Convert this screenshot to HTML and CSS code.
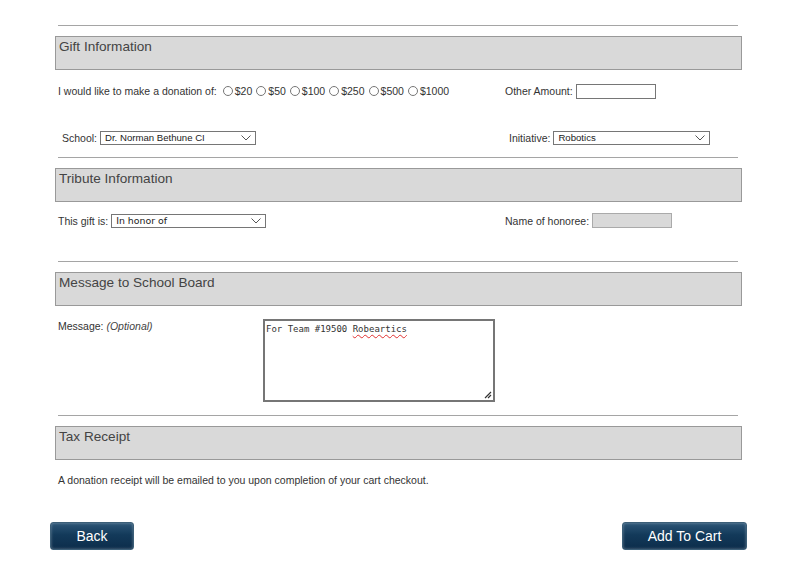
FILE: index.html
```html
<!DOCTYPE html>
<html lang="en">
<head>
  <meta charset="UTF-8">
  <meta name="viewport" content="width=device-width, initial-scale=1.0">
  <title>Donation</title>
  <link rel="stylesheet" href="styles.css">
</head>
<body>
  <div class="wrap">
    <!-- Gift -->
    <div class="rule"></div>
    <div class="head">Gift Information</div>
    <div class="row donation-row">
      <div class="col-left">
        <span class="label lead">I would like to make a donation of:</span>
        <label class="opt"><input type="radio" name="amt"><span>$20</span></label>
        <label class="opt"><input type="radio" name="amt"><span>$50</span></label>
        <label class="opt"><input type="radio" name="amt"><span>$100</span></label>
        <label class="opt"><input type="radio" name="amt"><span>$250</span></label>
        <label class="opt"><input type="radio" name="amt"><span>$500</span></label>
        <label class="opt"><input type="radio" name="amt"><span>$1000</span></label>
      </div>
      <div class="col-right">
        <span class="label">Other Amount:</span>
        <input class="text-in" type="text">
      </div>
    </div>
    <div class="row school-row">
      <div class="col-left indent">
        <span class="label">School:</span>
        <span class="sel w156">
          <select><option>Dr. Norman Bethune CI</option></select>
          <svg class="chev" width="10" height="6" viewBox="0 0 10 6"><path d="M0.5 0.5 L5 5 L9.5 0.5" fill="none" stroke="#555" stroke-width="1"/></svg>
        </span>
      </div>
      <div class="col-right indent">
        <span class="label">Initiative:</span>
        <span class="sel w157">
          <select><option>Robotics</option></select>
          <svg class="chev" width="10" height="6" viewBox="0 0 10 6"><path d="M0.5 0.5 L5 5 L9.5 0.5" fill="none" stroke="#555" stroke-width="1"/></svg>
        </span>
      </div>
    </div>

    <!-- Tribute -->
    <div class="rule gap-top-12"></div>
    <div class="head">Tribute Information</div>
    <div class="row tribute-row">
      <div class="col-left">
        <span class="label">This gift is:</span>
        <span class="sel w155">
          <select class="wide-font"><option>In honor of</option></select>
          <svg class="chev" width="10" height="6" viewBox="0 0 10 6"><path d="M0.5 0.5 L5 5 L9.5 0.5" fill="none" stroke="#555" stroke-width="1"/></svg>
        </span>
      </div>
      <div class="col-right">
        <span class="label">Name of honoree:</span>
        <input class="text-in disabled" type="text" disabled>
      </div>
    </div>

    <!-- Message -->
    <div class="rule gap-top-33"></div>
    <div class="head">Message to School Board</div>
    <div class="row message-row">
      <div class="msg-label"><span class="label">Message: <em>(Optional)</em></span></div>
      <div class="textarea">For Team #19500 <span class="typo">Robeartics</span>
        <svg class="grip" width="9" height="9" viewBox="0 0 9 9"><path d="M8 2 L2 8 M8 5 L5 8" stroke="#333" stroke-width="1.2"/></svg>
      </div>
    </div>

    <!-- Tax -->
    <div class="rule gap-top-13"></div>
    <div class="head">Tax Receipt</div>
    <div class="row receipt-row">
      <span class="label">A donation receipt will be emailed to you upon completion of your cart checkout.</span>
    </div>

    <div class="actions">
      <button class="btn back">Back</button>
      <button class="btn cart">Add To Cart</button>
    </div>
  </div>
</body>
</html>
```

FILE: styles.css
```css
body {
  margin: 0;
  background: #fff;
  font-family: "Liberation Sans", Arial, sans-serif;
  color: #333;
}
.wrap {
  width: 687px;
  margin-left: 55px;
  padding-top: 25px;
}
.rule {
  height: 1px;
  background: #a5a5a5;
  margin: 0 4px 10px 3px;
}
.gap-top-12 { margin-top: 12px; }
.gap-top-13 { margin-top: 13px; }
.gap-top-33 { margin-top: 33px; }
.head {
  background: #d9d9d9;
  border: 1px solid #999;
  padding: 1px 3px 0;
  box-sizing: border-box;
  height: 34px;
  font-size: 13.6px;
  line-height: 17px;
  color: #444;
}
.row {
  display: flex;
  align-items: center;
  padding-left: 3px;
  font-size: 10.5px;
}
.label {
  white-space: nowrap;
}
.label em {
  color: #444;
}
.col-left {
  width: 447px;
  display: flex;
  align-items: center;
}
.col-right {
  display: flex;
  align-items: center;
}
.indent {
  padding-left: 4px;
}
.col-left.indent {
  width: 443px;
}
.donation-row {
  margin-top: 14px;
  height: 14px;
}
.donation-row .lead {
  margin-right: 6px;
}
.opt {
  display: flex;
  align-items: center;
  margin-right: 4px;
}
.opt input {
  width: 10px;
  height: 10px;
  margin: 0 2px 0 0;
}
.col-right .label {
  margin-right: 3px;
}
.text-in {
  width: 80px;
  height: 15px;
  box-sizing: border-box;
  border: 1px solid #767676;
  padding: 0 2px;
  font-size: 10px;
  margin: 0;
}
.text-in.disabled {
  background: #d9d9d9;
  border-color: #aaa;
}
.school-row {
  margin-top: 32px;
  height: 15px;
}
.tribute-row {
  margin-top: 11px;
  height: 15px;
}
.school-row .label, .tribute-row .label {
  margin-right: 3px;
}
.sel {
  position: relative;
  display: inline-block;
  height: 14px;
}
.sel select {
  appearance: none;
  -webkit-appearance: none;
  width: 100%;
  height: 14px;
  box-sizing: border-box;
  border: 1px solid #767676;
  border-radius: 0;
  background: #fff;
  padding: 0 0 0 4px;
  margin: 0;
  font-family: "Liberation Sans", Arial, sans-serif;
  font-size: 9.6px;
  line-height: 12px;
  color: #222;
}
.sel select.wide-font {
  font-family: "DejaVu Sans", sans-serif;
  font-size: 9.4px;
}
.sel .chev {
  position: absolute;
  right: 5px;
  top: 4px;
}
.w155 { width: 155px; }
.w156 { width: 156px; }
.w157 { width: 157px; }
.message-row {
  margin-top: 13px;
  align-items: flex-start;
}
.msg-label {
  width: 205px;
  padding-top: 1px;
}
.textarea {
  position: relative;
  width: 232px;
  height: 83px;
  box-sizing: border-box;
  border: 2px solid #767676;
  padding: 2px 1px;
  font-family: "DejaVu Sans Mono", "Liberation Mono", monospace;
  font-size: 9px;
  line-height: 12px;
  color: #333;
}
.typo {
  text-decoration: underline wavy #e03030;
  text-decoration-thickness: 1px;
  text-underline-offset: 2px;
}
.grip {
  position: absolute;
  right: 1px;
  bottom: 1px;
}
.receipt-row {
  margin-top: 13px;
  height: 13px;
}
.actions {
  display: flex;
  justify-content: space-between;
  margin: 36px -5px 0;
}
.btn {
  height: 28px;
  border: 1px solid #3c5f78;
  border-radius: 3px;
  background: linear-gradient(#2d5677, #133a5a 45%, #0c2d4b);
  box-shadow: inset 0 0 3px rgba(255, 255, 255, 0.35);
  color: #fff;
  font-family: "Liberation Sans", Arial, sans-serif;
  font-size: 14px;
  padding: 0;
  cursor: pointer;
}
.back { width: 84px; }
.cart { width: 125px; }
```
